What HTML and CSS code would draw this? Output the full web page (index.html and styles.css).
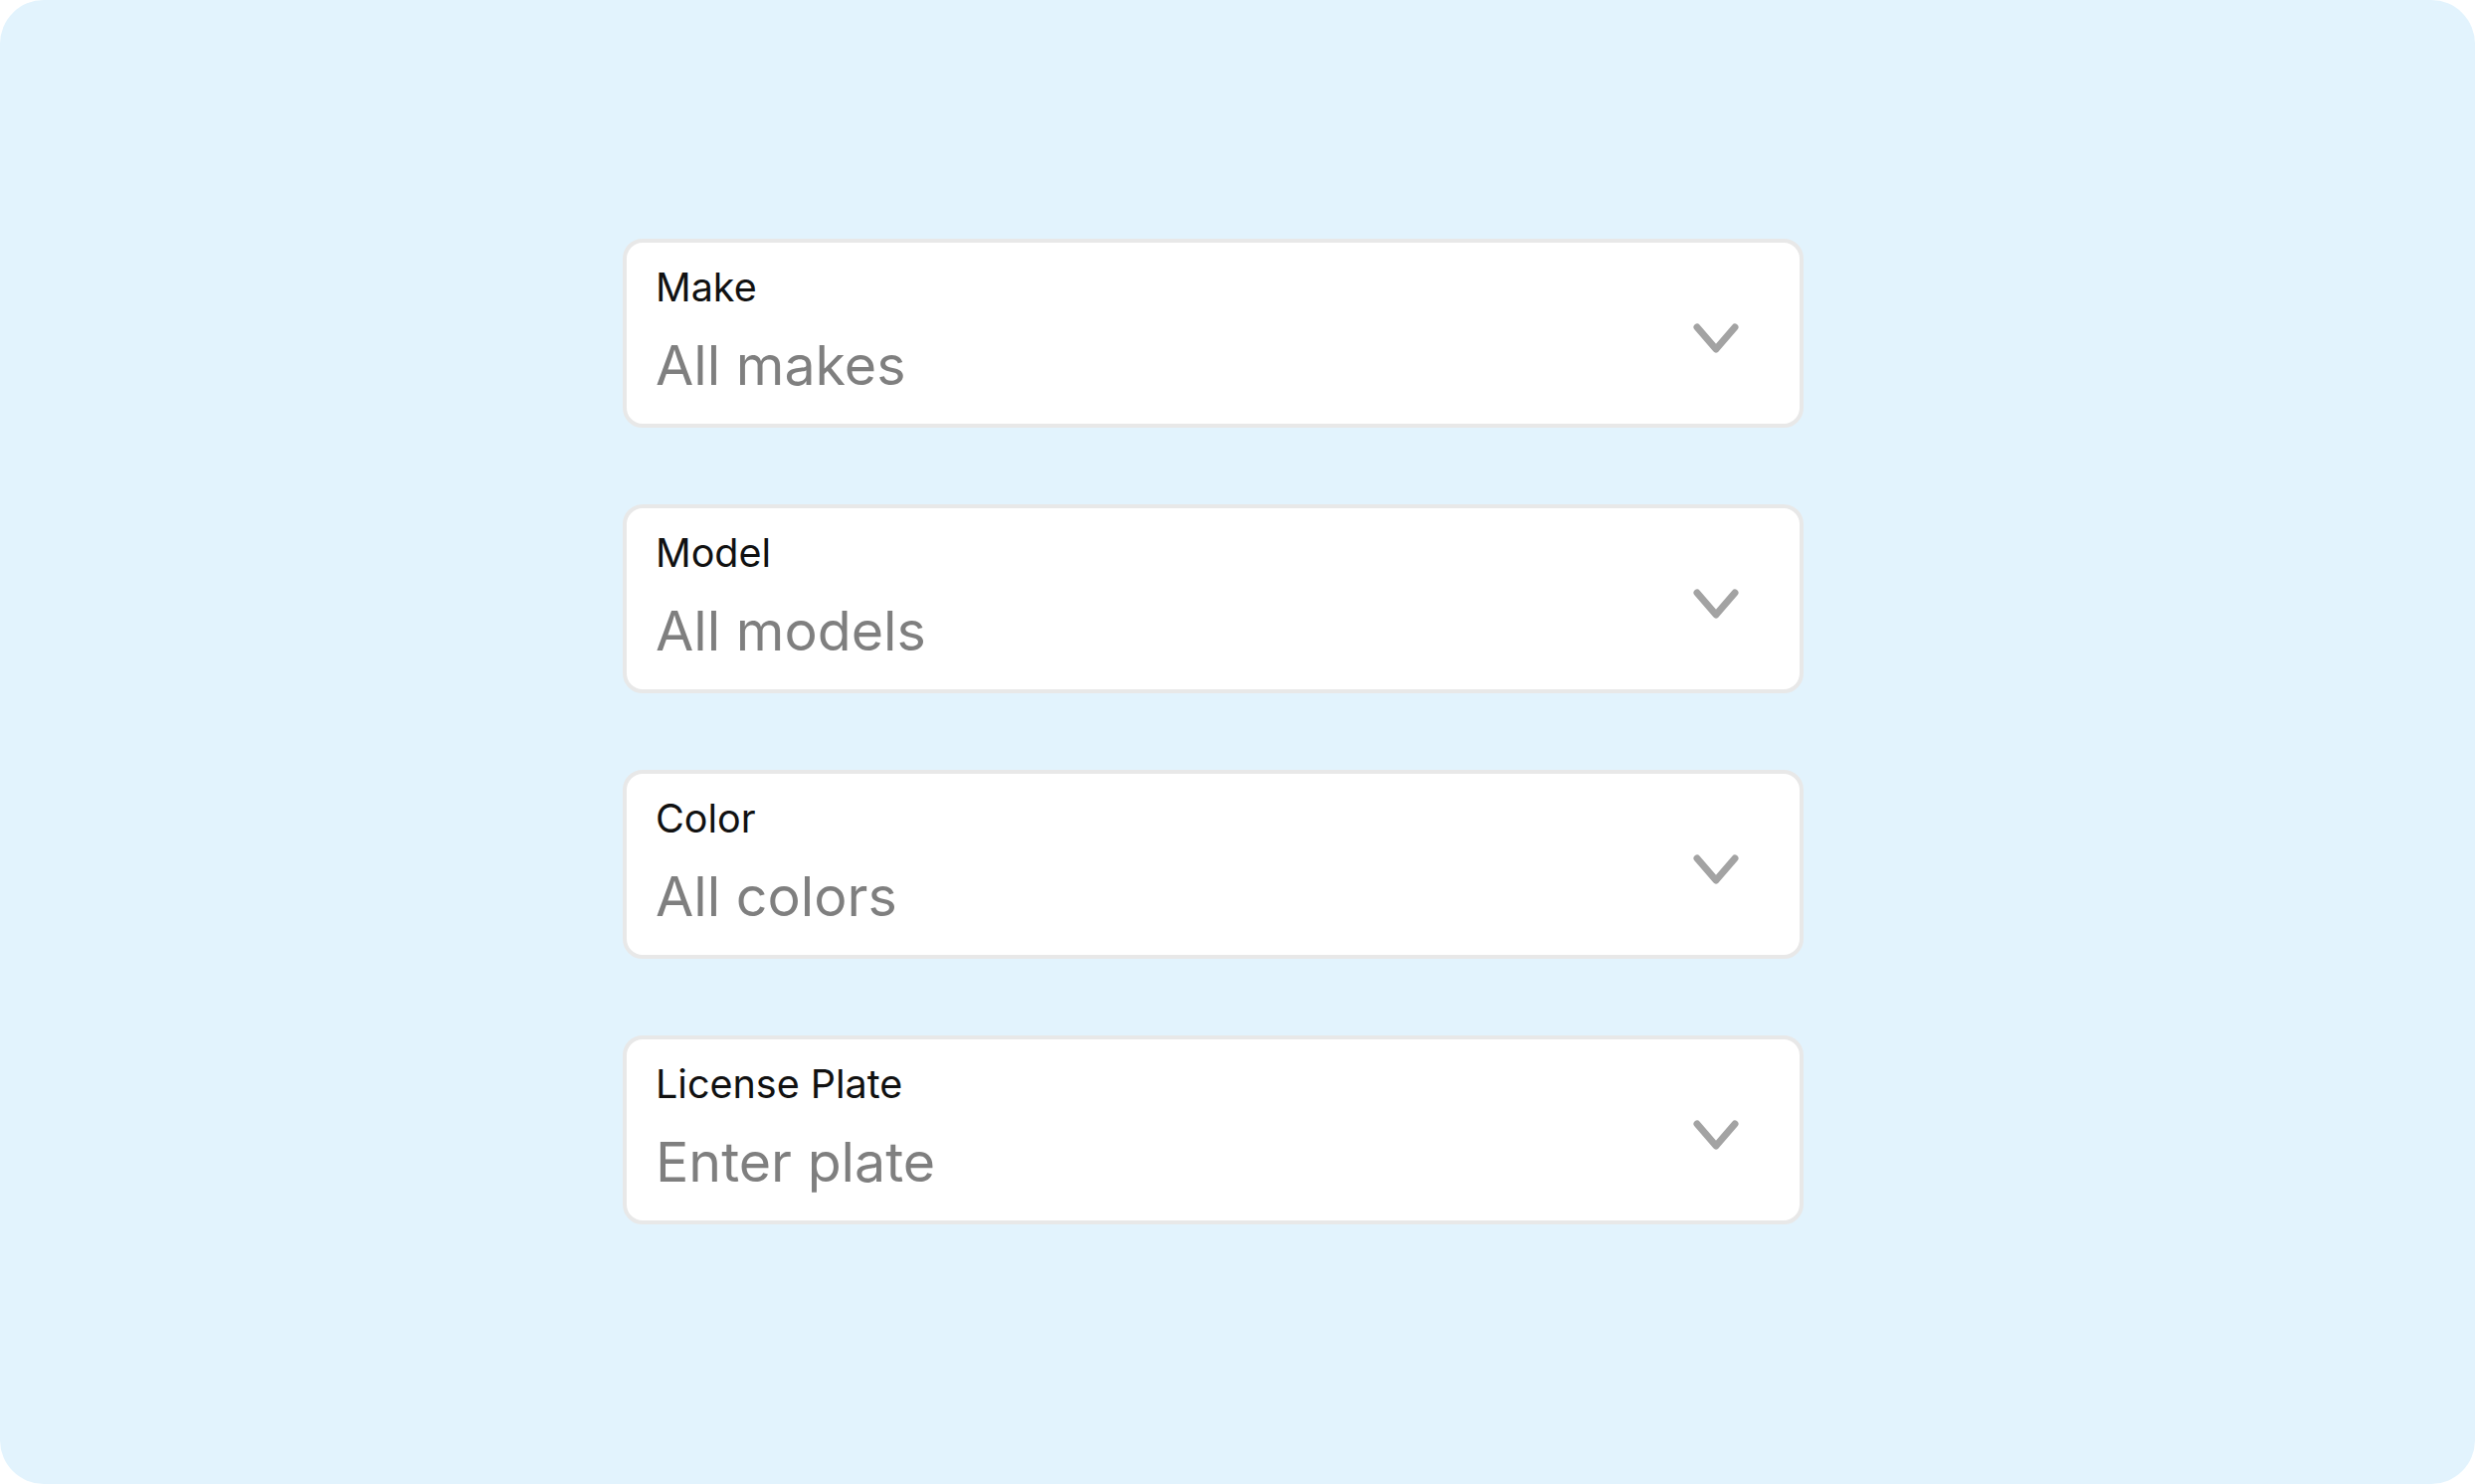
FILE: index.html
```html
<!DOCTYPE html>
<html lang="en">
<head>
<meta charset="utf-8">
<title>Vehicle filters</title>
<link rel="stylesheet" href="styles.css">
</head>
<body>
<main class="screen">
  <div class="fields">
    <div class="field">
      <div class="field-text">
        <div class="field-label">Make</div>
        <div class="field-value">All makes</div>
      </div>
      <svg class="chevron" viewBox="0 0 48 32" width="48" height="32"><path d="M5 5 L24 27 L43 5" /></svg>
    </div>
    <div class="field">
      <div class="field-text">
        <div class="field-label">Model</div>
        <div class="field-value">All models</div>
      </div>
      <svg class="chevron" viewBox="0 0 48 32" width="48" height="32"><path d="M5 5 L24 27 L43 5" /></svg>
    </div>
    <div class="field">
      <div class="field-text">
        <div class="field-label">Color</div>
        <div class="field-value">All colors</div>
      </div>
      <svg class="chevron" viewBox="0 0 48 32" width="48" height="32"><path d="M5 5 L24 27 L43 5" /></svg>
    </div>
    <div class="field">
      <div class="field-text">
        <div class="field-label">License Plate</div>
        <div class="field-value">Enter plate</div>
      </div>
      <svg class="chevron" viewBox="0 0 48 32" width="48" height="32"><path d="M5 5 L24 27 L43 5" /></svg>
    </div>
  </div>
</main>
</body>
</html>
```

FILE: styles.css
```css
html, body {
  margin: 0;
  padding: 0;
  background: #ffffff;
}

.screen {
  width: 2488px;
  height: 1492px;
  box-sizing: border-box;
  background: #e2f3fd;
  border-radius: 44px;
  padding: 240px 0 0 626px;
  font-family: Inter, "Noto Sans", sans-serif;
}

.fields {
  width: 1187px;
  display: flex;
  flex-direction: column;
  gap: 77px;
}

.field {
  box-sizing: border-box;
  height: 190px;
  background: #ffffff;
  border: 4px solid #e8e8e8;
  border-radius: 20px;
  padding: 22px 60px 0 29px;
  display: flex;
  align-items: flex-start;
  justify-content: space-between;
}

.field-text {
  display: flex;
  flex-direction: column;
  gap: 21px;
}

.field-label {
  font-size: 39.5px;
  line-height: 47px;
  color: #111111;
}

.field-value {
  font-size: 55.5px;
  line-height: 66px;
  color: #7f7f7f;
}

.chevron {
  align-self: center;
  margin-top: -12px;
  fill: none;
  stroke: #a3a3a3;
  stroke-width: 7;
  stroke-linecap: round;
  stroke-linejoin: round;
}
```
